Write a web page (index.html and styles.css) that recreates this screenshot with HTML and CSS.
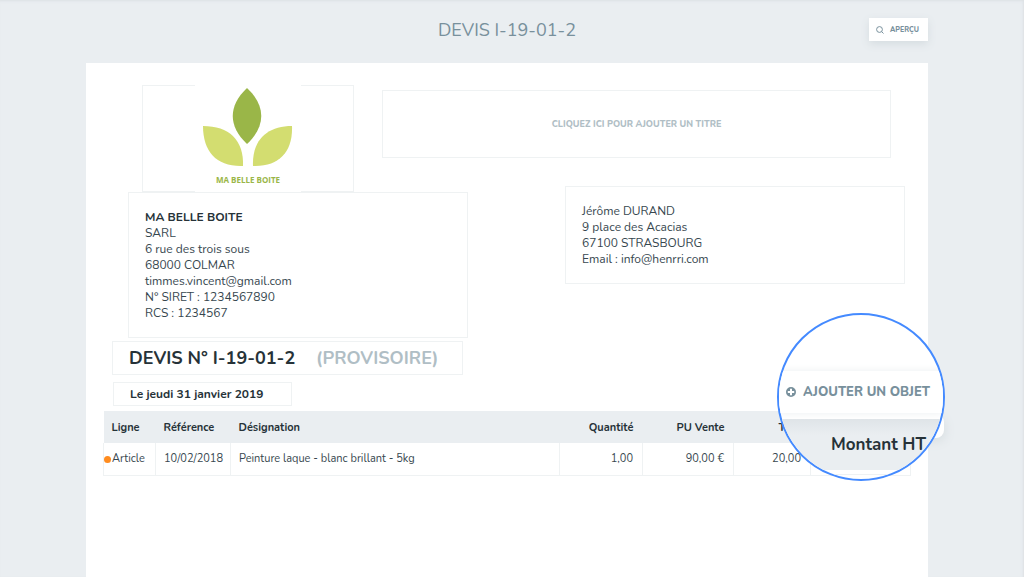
FILE: index.html
```html
<!DOCTYPE html>
<html lang="fr">
<head>
<meta charset="utf-8">
<title>Devis I-19-01-2</title>
<link rel="stylesheet" href="styles.css">
</head>
<body>
<div class="page">
  <header class="topbar">
    <h1 class="page-title">DEVIS I-19-01-2</h1>
    <button class="preview" type="button">
      <svg class="preview-icon" viewBox="0 0 16 16" aria-hidden="true"><circle cx="7" cy="7" r="5.8"/><path d="M11 11l4 4"/></svg>
      <span>APERÇU</span>
    </button>
  </header>
  <main class="paper">
    <section class="parties">
      <div class="seller">
        <div class="logo-box">
          <div class="logo">
            <svg class="leaves" viewBox="0 0 90 79" aria-hidden="true">
              <path fill="#9ab648" d="M44 0C63 18 63 38 44 56C25 38 25 18 44 0Z"/>
              <path fill="#d3dd70" d="M0 38C26 38 41 52 40 78C14 79 0 64 0 38Z"/>
              <path fill="#d3dd70" d="M89 38C64 38 49 52 50 78C76 79 90 64 89 38Z"/>
            </svg>
            <span class="logo-name">MA BELLE BOITE</span>
          </div>
        </div>
        <address class="card">
          <strong>MA BELLE BOITE</strong><br>SARL<br>6 rue des trois sous<br>68000 COLMAR<br>timmes.vincent@gmail.com<br>N° SIRET : 1234567890<br>RCS : 1234567
        </address>
      </div>
      <div class="client">
        <button class="add-title" type="button">CLIQUEZ ICI POUR AJOUTER UN TITRE</button>
        <address class="card client-card">
          Jérôme DURAND<br>9 place des Acacias<br>67100 STRASBOURG<br>Email : info@henrri.com
        </address>
      </div>
    </section>
    <h2 class="doc-title">DEVIS N° I-19-01-2 <span class="draft">(PROVISOIRE)</span></h2>
    <p class="doc-date">Le jeudi 31 janvier 2019</p>
    <table class="lines">
      <colgroup><col class="c-line"><col class="c-ref"><col><col class="c-qty"><col class="c-price"><col class="c-vat"><col class="c-total"></colgroup>
      <thead>
        <tr><th>Ligne</th><th>Référence</th><th>Désignation</th><th class="num">Quantité</th><th class="num">PU Vente</th><th class="vat">TVA</th><th></th></tr>
      </thead>
      <tbody>
        <tr><td class="kind">Article</td><td>10/02/2018</td><td>Peinture laque - blanc brillant - 5kg</td><td class="num">1,00</td><td class="num">90,00 €</td><td class="num">20,00</td><td></td></tr>
      </tbody>
    </table>
  </main>
  <div class="lens-tab"></div>
  <div class="lens">
    <button class="add-item" type="button">
      <svg class="plus" viewBox="0 0 12 12" aria-hidden="true"><circle cx="6" cy="6" r="6"/><path d="M6 2.8v6.4M2.8 6h6.4"/></svg>
      <span>AJOUTER UN OBJET</span>
    </button>
    <div class="amount">Montant HT</div>
    <div class="lens-row"></div>
  </div>
</div>
</body>
</html>
```
FILE: styles.css
```css
* { box-sizing: border-box; }
body {
  margin: 0;
  background: #eaeef1;
  color: #37474f;
  font: 12px/16px Nunito, Lato, sans-serif;
}
button { font-family: inherit; cursor: pointer; }
.page {
  position: relative;
  display: flex;
  flex-direction: column;
  min-height: 100vh;
  padding: 0 96px 0 86px;
  overflow: hidden;
  box-shadow: inset 0 3px 3px -2px #dce1e4, inset -3px 0 3px -2px #dce1e4;
}
.topbar {
  display: grid;
  grid-template-columns: 1fr auto 1fr;
  align-items: center;
  height: 63px;
  padding-bottom: 4px;
}
.page-title {
  grid-column: 2;
  margin: 0;
  color: #78909c;
  font-size: 18px;
  line-height: 24px;
  font-weight: 400;
}
.preview {
  justify-self: end;
  display: flex;
  align-items: center;
  gap: 6px;
  height: 23px;
  padding: 0 9px 0 7px;
  border: 0;
  background: #fff;
  box-shadow: 0 3px 8px #d5dce0;
  color: #78909c;
  font-size: 7px;
  font-weight: 800;
}
.preview-icon {
  width: 8px;
  height: 8px;
  fill: none;
  stroke: currentColor;
  stroke-width: 2;
}
.paper {
  flex: 1;
  padding: 22px 17px 0;
  background: #fff;
}
.parties { display: flex; justify-content: space-between; }
.seller { flex: none; width: 340px; margin-left: 25px; }
.logo-box {
  display: flex;
  justify-content: center;
  width: 212px;
  height: 107px;
  margin-left: 14px;
  border: 1px solid #eff2f3;
}
.logo {
  display: flex;
  flex-direction: column;
  align-items: center;
  width: 106px;
  margin: -1px 0;
  padding-top: 3px;
  background: #fff;
}
.leaves { width: 90px; height: 79px; }
.logo-name {
  margin-top: 5px;
  color: #9ab648;
  font: 700 8px/16px "Open Sans", sans-serif;
}
.card {
  padding: 16px;
  border: 1px solid #eff2f3;
  font-style: normal;
}
.card strong { color: #263238; }
.client {
  flex: 1;
  min-width: 0;
  display: flex;
  flex-direction: column;
  align-items: flex-end;
  gap: 28px;
  padding: 5px 6px 0 0;
}
.add-title {
  flex: none;
  width: 509px;
  height: 68px;
  margin-right: 14px;
  border: 1px solid #eff2f3;
  background: none;
  color: #b0bec5;
  font-size: 9px;
  font-weight: 800;
}
.client-card { width: 340px; }
.doc-title {
  width: 351px;
  margin: 3px 0 0 9px;
  padding: 4px 16px;
  border: 1px solid #eff2f3;
  color: #263238;
  font-size: 18px;
  line-height: 24px;
  font-weight: 700;
  white-space: nowrap;
}
.draft { margin-left: 16px; color: #b0bec5; }
.doc-date {
  width: 179px;
  margin: 7px 0 5px 10px;
  padding: 3px 16px;
  border: 1px solid #eff2f3;
  color: #263238;
  font-weight: 700;
}
.lines {
  width: 100%;
  table-layout: fixed;
  border-collapse: collapse;
  font-size: 11px;
}
.c-line { width: 52px; }
.c-ref { width: 75px; }
.c-qty { width: 83px; }
.c-price { width: 91px; }
.c-vat { width: 77px; }
.c-total { width: 100px; }
.lines th, .lines td { height: 32px; padding: 1px 8px 0; text-align: left; }
.lines th { background: #eaeef1; color: #263238; }
.lines td { border: 1px solid #eff2f3; border-top: 0; white-space: nowrap; }
.lines .num { padding-right: 9px; text-align: right; }
.lines .vat { padding-left: 45px; }
.lines .kind { position: relative; }
.kind::before {
  content: "";
  position: absolute;
  left: 0;
  top: 13px;
  width: 7px;
  height: 7px;
  border-radius: 50%;
  background: #ff8c1f;
}
.lens-tab {
  position: absolute;
  left: 903px;
  top: 414px;
  width: 41px;
  height: 24px;
  border-radius: 8px;
  background: #fff;
  box-shadow: 2px 4px 10px #dbe1e4;
}
.lens {
  position: absolute;
  left: 777px;
  top: 313px;
  width: 168px;
  height: 168px;
  padding-top: 56px;
  overflow: hidden;
  border: 2px solid #448aff;
  border-radius: 50%;
  background: #fff;
}
.add-item {
  display: flex;
  align-items: center;
  gap: 6px;
  width: 100%;
  height: 42px;
  padding: 0 6px;
  border: 0;
  background: #fff;
  box-shadow: 0 0 8px #eceff1;
  color: #78909c;
  font-size: 13px;
  font-weight: 800;
  white-space: nowrap;
}
.plus { flex: none; width: 12px; height: 12px; fill: #78909c; stroke: #fff; stroke-width: 2; }
.amount {
  margin-top: 6px;
  padding: 14px 17px 13px 0;
  background: linear-gradient(#dfe4e8, #eaeef1 16px);
  color: #263238;
  font-size: 17px;
  line-height: 24px;
  font-weight: 700;
  text-align: right;
}
.lens-row {
  width: 132px;
  height: 5px;
  border: solid #eff2f3;
  border-width: 0 1px 1px 0;
}
```
